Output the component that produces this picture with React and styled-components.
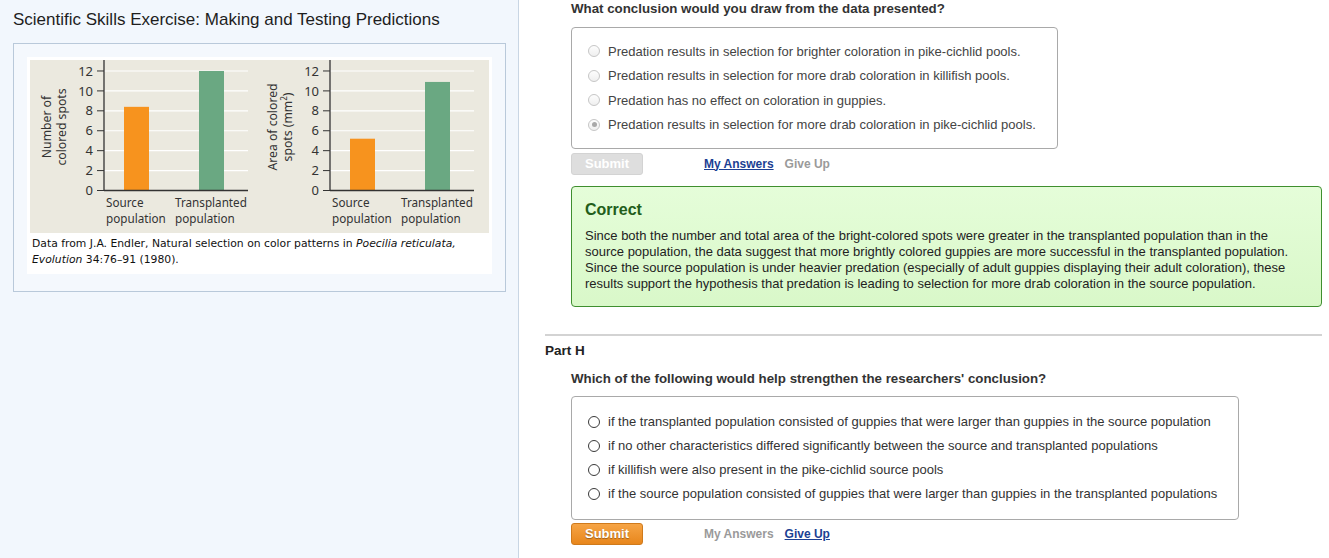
import styled, { createGlobalStyle } from 'styled-components';

const GlobalStyle = createGlobalStyle`
  html, body {
    margin: 0;
    padding: 0;
    background: #fff;
  }
  body {
    font-family: "Liberation Sans", Arial, sans-serif;
    color: #333;
  }
  * { box-sizing: border-box; }
`;

const Page = styled.div`
  display: flex;
  width: 1329px;
  height: 558px;
  overflow: hidden;
`;

const Sidebar = styled.aside`
  width: 519px;
  flex-shrink: 0;
  background: #f2f7fd;
  border-right: 1px solid #c9d6e4;
  padding: 10px 13px 0 13px;
`;

const Title = styled.h1`
  margin: 0;
  font-size: 17px;
  line-height: 20px;
  font-weight: normal;
  color: #1e1e1e;
`;

const FigureBox = styled.div`
  margin-top: 13px;
  width: 493px;
  border: 1px solid #b9c9da;
  background: #f4f8fd;
  padding: 13px 13px 17px 13px;
`;

const FigureImage = styled.div`
  background: #fff;
  padding: 3px 3px 6px 3px;
`;

const ChartRow = styled.div`
  display: flex;
  background: #ebe9df;
  height: 173px;
`;

const Caption = styled.p`
  margin: 3px 0 0 2px;
  font-family: "DejaVu Sans", Verdana, sans-serif;
  font-size: 10.8px;
  line-height: 16px;
  color: #111;
  white-space: nowrap;
  i { font-style: italic; }
`;

const Main = styled.main`
  flex: 1;
  padding: 1px 7px 0 26px;
`;

const Part = styled.section`
  padding-left: 26px;
`;

const Question = styled.div`
  font-size: 13.3px;
  line-height: 16px;
  font-weight: bold;
  color: #333;
`;

const OptionBox = styled.div`
  margin-top: ${p => p.$gap}px;
  width: fit-content;
  border: 1px solid #a9a9a9;
  border-radius: 4px;
  padding: ${p => p.$pad}px 21px ${p => p.$pad}px 16px;
  display: flex;
  flex-direction: column;
  gap: ${p => p.$rowGap}px;
  background: #fff;
`;

const Option = styled.label`
  display: flex;
  align-items: center;
  gap: 8px;
  height: 20px;
  font-size: 13px;
  color: ${p => (p.$disabled ? '#444' : '#333')};
  white-space: nowrap;
`;

const Radio = styled.span`
  position: relative;
  width: 12px;
  height: 12px;
  border-radius: 50%;
  flex-shrink: 0;
  border: 1px solid ${p => (p.$disabled ? '#c6c6c6' : '#3a3a3a')};
  background: ${p => (p.$disabled ? 'linear-gradient(#fdfdfd, #efefef)' : '#fff')};
  &::after {
    content: '';
    display: ${p => (p.$checked ? 'block' : 'none')};
    position: absolute;
    left: 2.5px;
    top: 2.5px;
    width: 5px;
    height: 5px;
    border-radius: 50%;
    background: #a8a8a8;
  }
`;

const Actions = styled.div`
  display: flex;
  align-items: center;
  margin-top: ${p => p.$gap}px;
`;

const SubmitButton = styled.button`
  width: 72px;
  height: 22px;
  border-radius: 3px;
  font-family: "Liberation Sans", Arial, sans-serif;
  font-size: 13px;
  font-weight: bold;
  color: #fff;
  padding: 0;
  margin-right: 61px;
  cursor: ${p => (p.disabled ? 'default' : 'pointer')};
  border: 1px solid ${p => (p.disabled ? '#d3d3d3' : '#cf7a1c')};
  background: ${p => (p.disabled ? '#dedede' : 'linear-gradient(#f6a445, #e8861c)')};
  text-shadow: ${p => (p.disabled ? 'none' : '0 1px 1px rgba(0,0,0,0.35)')};
`;

const ActionLink = styled.a`
  font-size: 12px;
  font-weight: bold;
  margin-right: 11px;
  color: ${p => (p.$active ? '#1c3f93' : '#9a9a9a')};
  text-decoration: ${p => (p.$active ? 'underline' : 'none')};
  cursor: pointer;
`;

const Feedback = styled.div`
  margin-top: 11px;
  border: 1px solid #3f8f2f;
  border-radius: 4px;
  background: linear-gradient(#e5fdd9, #d9f8c9);
  padding: 13px 13px 14px 13px;
`;

const FeedbackTitle = styled.div`
  font-size: 16px;
  line-height: 20px;
  font-weight: bold;
  color: #225e1b;
`;

const FeedbackText = styled.p`
  margin: 8px 0 0 0;
  font-size: 13px;
  line-height: 16px;
  color: #222;
  white-space: nowrap;
`;

const Divider = styled.hr`
  margin: 27px 0 0 0;
  border: none;
  height: 2px;
  background: #d3d3d3;
`;

const PartTitle = styled.h2`
  margin: 7px 0 0 0;
  font-size: 13.5px;
  line-height: 16px;
  font-weight: bold;
  color: #222;
`;

const SubQuestion = styled(Question)`
  margin-top: 12px;
`;

const AXIS_X = 74;
const ZERO_Y = 130.5;
const UNIT = 9.96;
const chartFont = '"Noto Sans", "DejaVu Sans", sans-serif';

function BarChart({ width, labelLines, values }) {
  const ticks = [0, 2, 4, 6, 8, 10, 12];
  const bars = [
    { x: 94, color: '#f7931e', v: values[0] },
    { x: 169, color: '#6aa882', v: values[1] },
  ];
  return (
    <svg width={width} height={173} viewBox={`0 0 ${width} 173`}>
      {ticks.slice(1).map(t => (
        <line key={'g' + t} x1={AXIS_X} x2={218} y1={ZERO_Y - t * UNIT} y2={ZERO_Y - t * UNIT} stroke="#fff" strokeWidth="1.2" />
      ))}
      {bars.map(b => (
        <rect key={b.x} x={b.x} y={ZERO_Y - b.v * UNIT} width={25} height={b.v * UNIT} fill={b.color} />
      ))}
      <line x1={AXIS_X} x2={AXIS_X} y1={0} y2={ZERO_Y} stroke="#333" strokeWidth="1.3" />
      <line x1={AXIS_X} x2={218} y1={ZERO_Y} y2={ZERO_Y} stroke="#333" strokeWidth="1.3" />
      {ticks.map(t => (
        <g key={'t' + t}>
          <line x1={AXIS_X - 7} x2={AXIS_X} y1={ZERO_Y - t * UNIT} y2={ZERO_Y - t * UNIT} stroke="#333" strokeWidth="1" />
          <text x={63} y={ZERO_Y - t * UNIT + 4.6} textAnchor="end" fontFamily={chartFont} fontSize="13" fill="#333">{t}</text>
        </g>
      ))}
      <text transform="rotate(-90)" textAnchor="middle" fontFamily={chartFont} fontSize="12.2" fill="#333">
        <tspan x={-67} y={20.7}>{labelLines[0]}</tspan>
        <tspan x={-67} y={36}>{labelLines[1]}</tspan>
      </text>
      <text fontFamily={chartFont} fontSize="11.7" fill="#333">
        <tspan x={76} y={147}>Source</tspan>
        <tspan x={76} y={162.5}>population</tspan>
        <tspan x={145} y={147}>Transplanted</tspan>
        <tspan x={145} y={162.5}>population</tspan>
      </text>
    </svg>
  );
}

const partG = [
  'Predation results in selection for brighter coloration in pike-cichlid pools.',
  'Predation results in selection for more drab coloration in killifish pools.',
  'Predation has no effect on coloration in guppies.',
  'Predation results in selection for more drab coloration in pike-cichlid pools.',
];

const partH = [
  'if the transplanted population consisted of guppies that were larger than guppies in the source population',
  'if no other characteristics differed significantly between the source and transplanted populations',
  'if killifish were also present in the pike-cichlid source pools',
  'if the source population consisted of guppies that were larger than guppies in the transplanted populations',
];

export default function App() {
  return (
    <>
      <GlobalStyle />
      <Page>
        <Sidebar>
          <Title>Scientific Skills Exercise: Making and Testing Predictions</Title>
          <FigureBox>
            <FigureImage>
              <ChartRow>
                <BarChart width={226} labelLines={['Number of', 'colored spots']} values={[8.4, 12]} />
                <BarChart
                  width={232}
                  labelLines={['Area of colored', <>spots (mm<tspan baselineShift="super" fontSize="8">2</tspan>)</>]}
                  values={[5.2, 10.9]}
                />
              </ChartRow>
              <Caption>
                Data from J.A. Endler, Natural selection on color patterns in <i>Poecilia reticulata,</i>
                <br />
                <i>Evolution</i> 34:76–91 (1980).
              </Caption>
            </FigureImage>
          </FigureBox>
        </Sidebar>

        <Main>
          <Part>
            <Question>What conclusion would you draw from the data presented?</Question>
            <OptionBox $gap={10} $pad={13} $rowGap={4.5}>
              {partG.map((text, i) => (
                <Option key={i} $disabled>
                  <Radio $disabled $checked={i === 3} />
                  {text}
                </Option>
              ))}
            </OptionBox>
            <Actions $gap={4}>
              <SubmitButton disabled>Submit</SubmitButton>
              <ActionLink $active>My Answers</ActionLink>
              <ActionLink>Give Up</ActionLink>
            </Actions>
            <Feedback>
              <FeedbackTitle>Correct</FeedbackTitle>
              <FeedbackText>
                Since both the number and total area of the bright-colored spots were greater in the transplanted population than in the
                <br />
                source population, the data suggest that more brightly colored guppies are more successful in the transplanted population.
                <br />
                Since the source population is under heavier predation (especially of adult guppies displaying their adult coloration), these
                <br />
                results support the hypothesis that predation is leading to selection for more drab coloration in the source population.
              </FeedbackText>
            </Feedback>
          </Part>

          <Divider />
          <PartTitle>Part H</PartTitle>

          <Part>
            <SubQuestion>Which of the following would help strengthen the researchers' conclusion?</SubQuestion>
            <OptionBox $gap={9} $pad={15} $rowGap={4}>
              {partH.map((text, i) => (
                <Option key={i}>
                  <Radio />
                  {text}
                </Option>
              ))}
            </OptionBox>
            <Actions $gap={3}>
              <SubmitButton>Submit</SubmitButton>
              <ActionLink>My Answers</ActionLink>
              <ActionLink $active>Give Up</ActionLink>
            </Actions>
          </Part>
        </Main>
      </Page>
    </>
  );
}
